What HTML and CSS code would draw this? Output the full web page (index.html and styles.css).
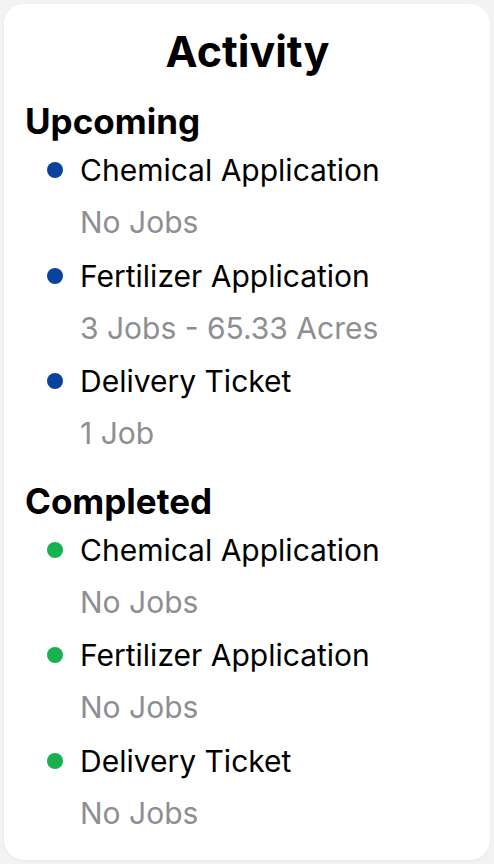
FILE: index.html
```html
<!DOCTYPE html>
<html lang="en">
<head>
    <meta charset="UTF-8">
    <meta name="viewport" content="width=device-width, initial-scale=1.0">
    <title>Activity</title>
    <link rel="stylesheet" href="styles.css">
</head>
<body>
    <div class="card">
        <h1>Activity</h1>

        <section class="group">
            <h2>Upcoming</h2>
            <div class="item">
                <div class="item-title"><span class="dot upcoming"></span>Chemical Application</div>
                <div class="item-sub">No Jobs</div>
            </div>
            <div class="item">
                <div class="item-title"><span class="dot upcoming"></span>Fertilizer Application</div>
                <div class="item-sub">3 Jobs - 65.33 Acres</div>
            </div>
            <div class="item">
                <div class="item-title"><span class="dot upcoming"></span>Delivery Ticket</div>
                <div class="item-sub">1 Job</div>
            </div>
        </section>

        <section class="group">
            <h2>Completed</h2>
            <div class="item">
                <div class="item-title"><span class="dot completed"></span>Chemical Application</div>
                <div class="item-sub">No Jobs</div>
            </div>
            <div class="item">
                <div class="item-title"><span class="dot completed"></span>Fertilizer Application</div>
                <div class="item-sub">No Jobs</div>
            </div>
            <div class="item">
                <div class="item-title"><span class="dot completed"></span>Delivery Ticket</div>
                <div class="item-sub">No Jobs</div>
            </div>
        </section>
    </div>
</body>
</html>
```

FILE: styles.css
```css
* {
    box-sizing: border-box;
}
body {
    margin: 0;
    padding: 4px;
    background-color: #f3f3f5;
    font-family: Inter, 'Liberation Sans', sans-serif;
    color: #000;
}
.card {
    background: white;
    border-radius: 20px;
    height: 856px;
    padding: 19px 20px 0 21px;
    box-shadow: 0 1px 3px rgba(0,0,0,0.06);
}
h1 {
    margin: 0;
    text-align: center;
    font-size: 43px;
    font-weight: 700;
    line-height: 56px;
}
h2 {
    margin: 0 0 2px;
    font-size: 35px;
    font-weight: 700;
    line-height: 44px;
}
.group {
    margin-top: 20px;
}
.group + .group {
    margin-top: 17px;
}
.item {
    padding-left: 22px;
}
.item-title {
    display: flex;
    align-items: center;
    font-size: 30px;
    line-height: 50px;
}
.item-sub {
    padding-left: 33px;
    font-size: 30px;
    line-height: 55.5px;
    color: #8e8e93;
}
.dot {
    width: 16px;
    height: 16px;
    border-radius: 50%;
    margin-right: 17px;
    flex-shrink: 0;
}
.upcoming {
    background: #0a439c;
}
.completed {
    background: #17b14f;
}
```
